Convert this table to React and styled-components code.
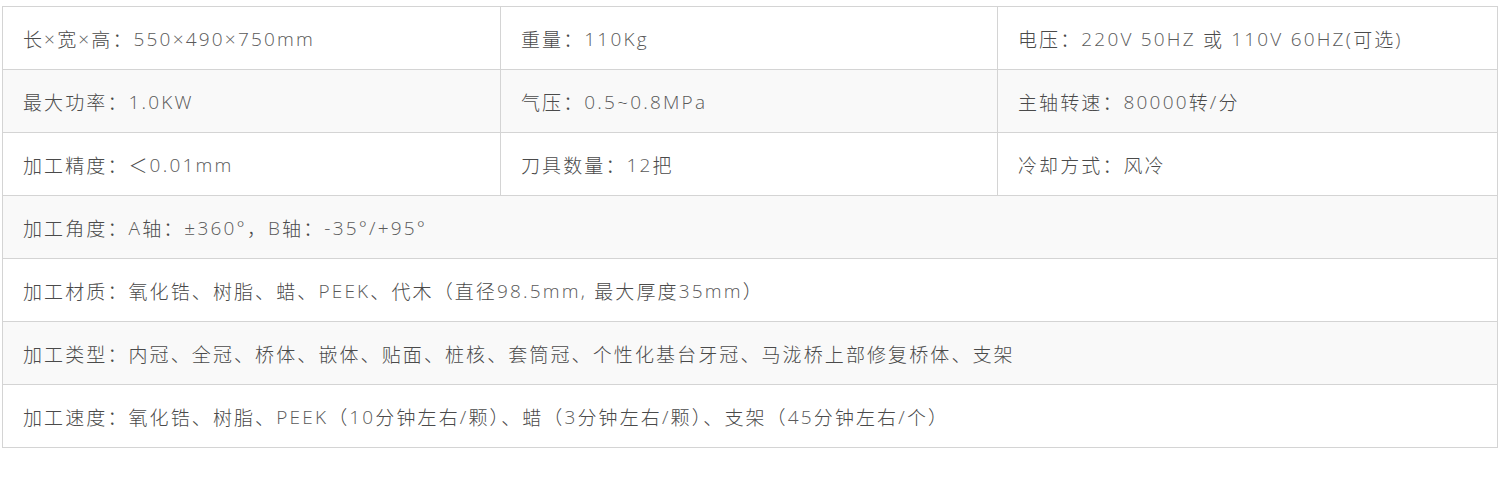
import React from "react";
import styled, { createGlobalStyle } from "styled-components";

const GlobalStyle = createGlobalStyle`
  html, body {
    margin: 0;
    padding: 0;
    background: #ffffff;
  }
`;

const specRows = [
  ["长×宽×高：550×490×750mm", "重量：110Kg", "电压：220V 50HZ 或 110V 60HZ(可选)"],
  ["最大功率：1.0KW", "气压：0.5~0.8MPa", "主轴转速：80000转/分"],
  ["加工精度：＜0.01mm", "刀具数量：12把", "冷却方式：风冷"],
  ["加工角度：A轴：±360°，B轴：-35°/+95°"],
  ["加工材质：氧化锆、树脂、蜡、PEEK、代木（直径98.5mm, 最大厚度35mm）"],
  ["加工类型：内冠、全冠、桥体、嵌体、贴面、桩核、套筒冠、个性化基台牙冠、马泷桥上部修复桥体、支架"],
  ["加工速度：氧化锆、树脂、PEEK（10分钟左右/颗）、蜡（3分钟左右/颗）、支架（45分钟左右/个）"],
];

// split a string into latin and CJK runs so each gets its own spacing
const latinRun = /([\u0020-\u007e±°×]+)/;

function SpecText({ text }) {
  return text
    .split(latinRun)
    .filter(Boolean)
    .map((part, i) =>
      latinRun.test(part) ? <Latin key={i}>{part}</Latin> : <span key={i}>{part}</span>
    );
}

export default function App() {
  return (
    <>
      <GlobalStyle />
      <Page>
        <SpecTable>
          {specRows.map((cells, i) => (
            <Row key={i} $shaded={i % 2 === 1} $full={cells.length === 1}>
              {cells.map((text, j) => (
                <Cell key={j}>
                  <SpecText text={text} />
                </Cell>
              ))}
            </Row>
          ))}
        </SpecTable>
      </Page>
    </>
  );
}

const Page = styled.div`
  padding: 6px 2px 0 2px;
`;

const SpecTable = styled.div`
  width: 1496px;
  box-sizing: border-box;
  border: 1px solid #d4d4d4;
  border-bottom: none;
  display: flex;
  flex-direction: column;
`;

const Row = styled.div`
  display: grid;
  grid-template-columns: ${(p) => (p.$full ? "1fr" : "497px 497px 1fr")};
  height: 63px;
  box-sizing: border-box;
  border-bottom: 1px solid #d4d4d4;
  background-color: ${(p) => (p.$shaded ? "#f9f9f9" : "#ffffff")};
`;

const Cell = styled.div`
  display: flex;
  align-items: center;
  padding: 2px 0 0 20px;
  border-left: 1px solid #d4d4d4;
  font-family: "Open Sans", "Noto Sans CJK SC", sans-serif;
  font-size: 19px;
  font-weight: 300;
  letter-spacing: 2.1px;
  color: #4a4a4a;
  white-space: pre;

  &:first-child {
    border-left: none;
  }
`;

const Latin = styled.span`
  letter-spacing: 2.2px;
  color: #5a5a5a;
`;
